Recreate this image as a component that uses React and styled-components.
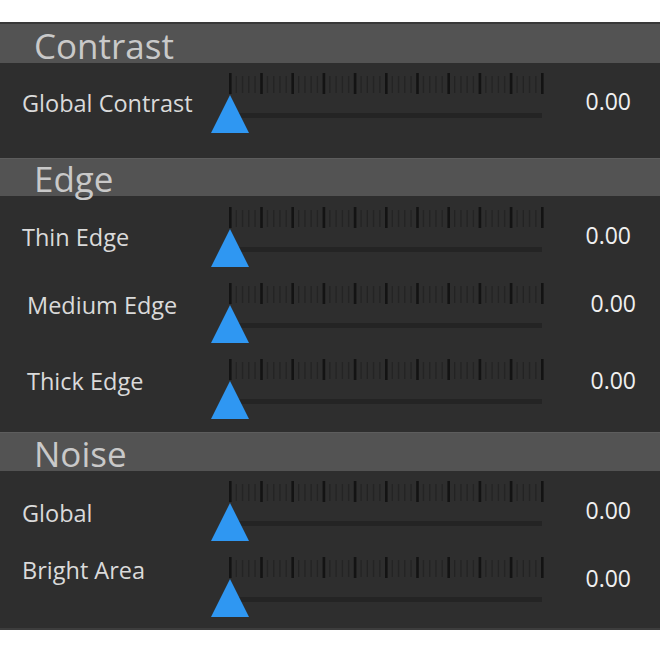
import React from "react";
import styled, { createGlobalStyle } from "styled-components";

const GlobalStyle = createGlobalStyle`
  html, body { margin: 0; padding: 0; background: #ffffff; }
  body { font-family: "Open Sans", "Noto Sans", sans-serif; }
`;

const Panel = styled.div`
  margin-top: 22px;
  width: 660px;
  background: #2e2e2e;
  border-top: 2px solid #383838;
  border-bottom: 2px solid #3d3d3d;
`;

const SectionHeader = styled.div`
  box-sizing: border-box;
  height: ${(p) => p.$h}px;
  background: #535353;
  border-top: 1px solid ${(p) => (p.$first ? "#535353" : "#5d5d5d")};
  padding: 3px 0 0 34px;
  font-size: 35px;
  line-height: ${(p) => p.$h - 4}px;
  color: #c9c9c9;
  white-space: nowrap;
`;

const SectionBody = styled.div`
  padding-bottom: ${(p) => p.$pb}px;
`;

const Row = styled.div`
  display: grid;
  grid-template-columns: 211px 338px 1fr;
  height: 76px;
  align-items: start;
`;

const Label = styled.div`
  padding-top: ${(p) => p.$top}px;
  padding-left: ${(p) => 22 + p.$indent}px;
  font-size: 23.5px;
  font-weight: 500;
  line-height: 24px;
  color: #dadada;
  white-space: nowrap;
`;

const Value = styled.div`
  justify-self: end;
  padding-top: ${(p) => p.$top}px;
  padding-right: ${(p) => 29 - p.$indent}px;
  font-size: 23px;
  font-weight: 500;
  line-height: 24px;
  color: #f0f0f0;
`;

const SliderBox = styled.div`
  position: relative;
  margin-top: ${(p) => p.$mt}px;
  width: 338px;
  height: 60px;
`;

const Ticks = styled.svg`
  display: block;
  margin-left: 18px;
`;

const Track = styled.div`
  margin: 19px 0 0 18px;
  width: 313px;
  height: 5px;
  background: #242424;
`;

const Thumb = styled.svg`
  position: absolute;
  left: 0;
  top: 22px;
`;

const TickRuler = () => {
  const items = [];
  const step = 31.2;
  for (let i = 0; i <= 10; i++) {
    const x = i * step;
    items.push(<rect key={"M" + i} x={x} y={0} width={2.6} height={21} fill="#131313" />);
    if (i < 10) {
      for (let j = 1; j < 5; j++) {
        items.push(
          <rect key={`m${i}-${j}`} x={x + j * (step / 5) + 0.4} y={3} width={1.3} height={17} fill="#242424" />
        );
      }
    }
  }
  return (
    <Ticks width="316" height="21" viewBox="0 0 316 21">
      {items}
    </Ticks>
  );
};

const Slider = ({ mt = 10 }) => (
  <SliderBox $mt={mt}>
    <TickRuler />
    <Track />
    <Thumb width="38" height="38" viewBox="0 0 38 38">
      <polygon points="19,0 38,38 0,38" fill="#2f97f2" />
    </Thumb>
  </SliderBox>
);

const SliderRow = ({ label, labelTop, valueTop, indent = 0, mt }) => (
  <Row>
    <Label $top={labelTop} $indent={indent}>{label}</Label>
    <Slider mt={mt} />
    <Value $top={valueTop} $indent={indent}>0.00</Value>
  </Row>
);

export default function App() {
  return (
    <>
      <GlobalStyle />
      <Panel>
        <SectionHeader $h={39} $first>Contrast</SectionHeader>
        <SectionBody $pb={19}>
          <SliderRow label="Global Contrast" labelTop={28} valueTop={26} />
        </SectionBody>

        <SectionHeader $h={38}>Edge</SectionHeader>
        <SectionBody $pb={8}>
          <SliderRow label="Thin Edge" labelTop={29} valueTop={27} mt={11} />
          <SliderRow label="Medium Edge" labelTop={21} valueTop={19} indent={5} mt={11} />
          <SliderRow label="Thick Edge" labelTop={21} valueTop={20} indent={5} mt={11} />
        </SectionBody>

        <SectionHeader $h={39}>Noise</SectionHeader>
        <SectionBody $pb={5}>
          <SliderRow label="Global" labelTop={30} valueTop={27} />
          <SliderRow label="Bright Area" labelTop={11} valueTop={19} />
        </SectionBody>
      </Panel>
    </>
  );
}
